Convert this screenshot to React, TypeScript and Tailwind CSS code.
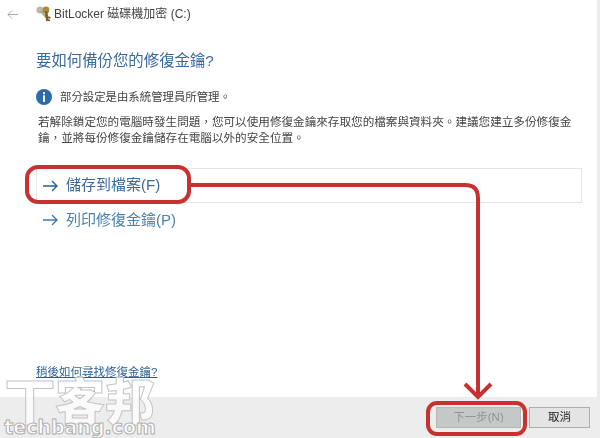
const cjk = "font-['Liberation_Sans','Noto_Sans_CJK_TC',sans-serif]";

function KeyIcon() {
  return (
    <svg width="17" height="18" viewBox="0 0 17 18" className="shrink-0">
      <circle cx="5" cy="5" r="3.6" fill="#b9b9a8" />
      <path d="M6 6l6 7" stroke="#a8a896" strokeWidth="2.4" />
      <circle cx="11" cy="5" r="3.4" fill="#b08a3c" />
      <path d="M11 6l1.5 10" stroke="#7f5f24" strokeWidth="2.6" />
      <path d="M13 12l2.5 1M13 15l2 .6" stroke="#7f5f24" strokeWidth="1.6" />
    </svg>
  );
}

function InfoIcon() {
  return (
    <svg width="16" height="16" viewBox="0 0 16 16" className="shrink-0">
      <circle cx="8" cy="8" r="8" fill="#2a6cab" />
      <rect x="7" y="3.2" width="2" height="2" fill="#fff" />
      <rect x="7" y="6.4" width="2" height="6.4" fill="#fff" />
    </svg>
  );
}

function Arrow({ color }: { color: string }) {
  return (
    <svg width="15" height="12" viewBox="0 0 15 12" fill="none" stroke={color} strokeWidth="1.4" className="shrink-0">
      <path d="M0 6h14M9 1l5 5-5 5" />
    </svg>
  );
}

function Annotations() {
  return (
    <svg width="600" height="438" viewBox="0 0 600 438" fill="none" stroke="#c8312f" className="absolute left-0 top-0 pointer-events-none">
      <rect x="27" y="167" width="162" height="35" rx="11" strokeWidth="4" />
      <path d="M190 185H465Q478 185 478 198V394" strokeWidth="4" />
      <path d="M465 384L478 397L491 384" strokeWidth="4" />
      <rect x="428" y="403" width="97" height="31" rx="9" strokeWidth="4" />
    </svg>
  );
}

function Watermark() {
  return (
    <div className="absolute left-0 top-[378px] w-[160px] flex flex-col items-center pointer-events-none">
      <div className="font-['Noto_Sans_CJK_TC',sans-serif] font-black text-[50px] h-[40px] leading-[40px] text-white/70 [-webkit-text-stroke:1px_#c4c4c4] whitespace-nowrap">
        丅客邦
      </div>
      <div className="font-['DejaVu_Sans',sans-serif] font-bold text-[19px] leading-[19px] text-white/90 [-webkit-text-stroke:1px_#b0b0b0] whitespace-nowrap">
        techbang.com
      </div>
    </div>
  );
}

export default function App() {
  return (
    <div className={`relative w-[600px] h-[438px] overflow-hidden bg-white flex flex-col ${cjk}`}>
      <div className="flex-1 flex flex-col border-r-[3px] border-[#ececec] blur-[0.4px]">
        <div className="h-[26px] flex items-center pl-[7px] mt-[1px]">
          <svg width="11" height="9" viewBox="0 0 11 9" fill="none" stroke="#a9a9a9" strokeWidth="1">
            <path d="M11 4.5H1M5 .5l-4 4 4 4" />
          </svg>
          <div className="ml-[17px]">
            <KeyIcon />
          </div>
          <span className="ml-[2px] text-[12px] text-[#444]">BitLocker 磁碟機加密 (C:)</span>
        </div>

        <div className="pl-[36px] pt-[22px] flex flex-col">
          <h1 className="text-[15.4px] leading-[24px] text-[#3a6a9e]">要如何備份您的修復金鑰?</h1>
          <div className="mt-[16px] flex items-center">
            <InfoIcon />
            <span className="ml-[8px] text-[11.4px] leading-[16px] text-[#444]">部分設定是由系統管理員所管理。</span>
          </div>
          <p className="mt-[9px] ml-[2px] w-[540px] text-[11.6px] leading-[16px] text-[#444]">
            若解除鎖定您的電腦時發生問題，您可以使用修復金鑰來存取您的檔案與資料夾。建議您建立多份修復金鑰，並將每份修復金鑰儲存在電腦以外的安全位置。
          </p>
          <div className="mt-[22px] w-[546px] h-[35px] border border-[#e6e6e6] flex items-center pl-[6px]">
            <Arrow color="#2b5f98" />
            <span className="ml-[8px] text-[15px] text-[#3a6a9e]">儲存到檔案(F)</span>
          </div>
          <div className="mt-[5px] h-[24px] flex items-center pl-[7px]">
            <Arrow color="#3b7cb0" />
            <span className="ml-[8px] text-[15px] text-[#4a83b2]">列印修復金鑰(P)</span>
          </div>
          <a className="mt-[132px] text-[11.5px] leading-[16px] text-[#2b5f98] underline">稍後如何尋找修復金鑰?</a>
        </div>
      </div>

      <div className="h-[41px] bg-[#ededed] flex items-start justify-end pt-[10px] pr-[10px] gap-[8px] blur-[0.4px]">
        <div className="w-[85px] h-[21px] bg-[#c4c8c6] border border-[#b5b8b6] flex items-center justify-center text-[11.5px] text-[#8f9492]">
          下一步(N)
        </div>
        <div className="w-[61px] h-[21px] bg-[#e4e4e4] border border-[#adadad] flex items-center justify-center text-[11.5px] text-[#222]">
          取消
        </div>
      </div>

      <Watermark />
      <Annotations />
    </div>
  );
}
